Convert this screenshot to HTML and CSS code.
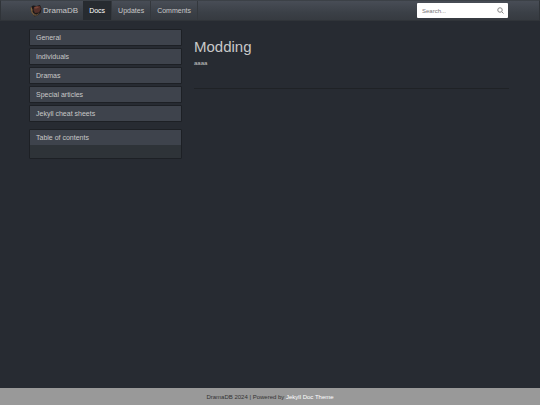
FILE: index.html
```html
<!DOCTYPE html>
<html lang="en">
  <head>
    <meta charset="UTF-8" />
    <meta name="viewport" content="width=device-width, initial-scale=1.0" />
    <title>Modding - DramaDB</title>
    <link rel="stylesheet" href="styles.css">
  </head>
  <body>
    <header class="navbar">
      <div class="container navbar-inner">
        <a class="brand" href="#">
          <svg class="brand-logo" viewBox="0 0 24 26" aria-hidden="true">
            <path d="M1 7 L6 3 L13 4 L20 2 L23 9 L21 18 L15 23 L9 25 L4 18 Z" fill="#1b1819" />
            <path d="M1 7 L3 6 L5 11 L5 16 L10 22 L8 23 L3 17 Z" fill="#80623f" />
            <path d="M8 6 L14 4 L20 4 L22 10 L18 17 L10 18 L7 12 Z" fill="#54302a" />
            <path d="M9 6 L15 5 L18 7 L13 9 L9 9 Z" fill="#79473a" />
            <path d="M8 19 L13 21 L20 17 L15 23 L9 24 Z" fill="#5b4a36" />
          </svg>
          DramaDB
        </a>
        <nav class="nav">
          <a class="nav-link active" href="#">Docs</a>
          <a class="nav-link" href="#">Updates</a>
          <a class="nav-link" href="#">Comments</a>
        </nav>
        <form class="search">
          <input type="text" class="search-input" placeholder="Search..." aria-label="Search" />
          <button type="button" class="search-button" aria-label="Submit search">
            <svg class="search-icon" viewBox="0 0 14 14" aria-hidden="true">
              <circle cx="6" cy="6" r="4.5" />
              <path d="M9.5 9.5 L13 13" />
            </svg>
          </button>
        </form>
      </div>
    </header>

    <div class="container page">
      <aside class="sidebar">
        <div class="panel-group">
          <div class="panel"><a class="panel-heading" href="#">General</a></div>
          <div class="panel"><a class="panel-heading" href="#">Individuals</a></div>
          <div class="panel"><a class="panel-heading" href="#">Dramas</a></div>
          <div class="panel"><a class="panel-heading" href="#">Special articles</a></div>
          <div class="panel"><a class="panel-heading" href="#">Jekyll cheat sheets</a></div>
        </div>
        <div class="panel">
          <div class="panel-heading">Table of contents</div>
          <div class="panel-body"></div>
        </div>
      </aside>
      <main class="content">
        <h1>Modding</h1>
        <p>aaaa</p>
        <hr />
      </main>
    </div>

    <footer class="footer">
      DramaDB 2024 | Powered by <a href="#">Jekyll Doc Theme</a>
    </footer>
  </body>
</html>
```
FILE: styles.css
```css
* {
  box-sizing: border-box;
}
body {
  display: flex;
  flex-direction: column;
  min-height: 100vh;
  margin: 0;
  font-family: "Liberation Sans", Arial, sans-serif;
  font-size: 7px;
  line-height: 10px;
  background-color: #272b32;
  color: #c8c8c8;
}
a {
  color: inherit;
  text-decoration: none;
}
.container {
  width: 100%;
  padding: 0 31px 0 29px;
}

.navbar {
  background-image: linear-gradient(#484d56, #3b4047 60%, #363a40);
  border: 1px solid #303439;
  border-top-color: #3c4147;
}
.navbar-inner {
  display: flex;
  align-items: center;
}
.brand {
  display: flex;
  align-items: center;
  gap: 1px;
  padding-right: 5px;
  font-size: 8px;
}
.brand-logo {
  width: 12px;
  height: 13px;
}
.nav {
  display: flex;
  flex: 1;
}
.nav-link {
  padding: 5px 6px 4px;
  border-right: 1px solid #34383d;
}
.nav-link.active {
  background-color: #272b30;
  color: #fff;
}
.search {
  display: flex;
  align-items: center;
  width: 91px;
  height: 15px;
  background-color: #fff;
  border-radius: 1px;
}
.search-input {
  flex: 1;
  min-width: 0;
  padding: 0 5px;
  border: 0;
  background: none;
  font-family: inherit;
  font-size: 6px;
  color: #333;
}
.search-input::placeholder {
  color: #777;
}
.search-button {
  display: flex;
  padding: 0 4px;
  border: 0;
  background: none;
}
.search-icon {
  width: 7px;
  height: 7px;
  fill: none;
  stroke: #888;
  stroke-width: 2;
}

.page {
  display: grid;
  grid-template-columns: 153fr 315fr;
  column-gap: 12px;
  flex: 1;
  align-items: start;
  padding-top: 8px;
}
.panel-group {
  display: grid;
  gap: 2px;
  margin-bottom: 7px;
}
.panel {
  border: 1px solid #1d2025;
  border-radius: 1px;
  background-color: #2e3338;
}
.panel-heading {
  display: block;
  padding: 2px 6px;
  line-height: 11px;
  background-color: #3e434c;
}
.panel-body {
  height: 13px;
}

.content h1 {
  margin: 9px 0 2px;
  font-size: 15px;
  font-weight: normal;
  line-height: 18px;
}
.content p {
  margin: 0;
  font-size: 6px;
}
.content hr {
  margin: 20px 0 0;
  border: 0;
  border-top: 1px solid #1f2226;
}

.footer {
  padding: 4px 0 3px;
  background-color: #999;
  color: #333;
  font-size: 6px;
  text-align: center;
}
.footer a {
  color: #fff;
}
```
